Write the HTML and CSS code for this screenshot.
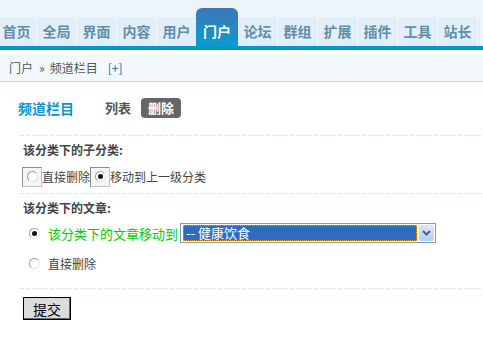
FILE: index.html
```html
<!DOCTYPE html>
<html lang="zh-CN">
<head>
    <meta charset="UTF-8">
    <title>频道栏目</title>
    <link rel="stylesheet" href="styles.css">
</head>
<body>

    <div class="header">
        <ul class="nav">
            <li>首页</li>
            <li>全局</li>
            <li>界面</li>
            <li>内容</li>
            <li>用户</li>
            <li class="active">门户</li>
            <li>论坛</li>
            <li>群组</li>
            <li>扩展</li>
            <li>插件</li>
            <li>工具</li>
            <li>站长</li>
        </ul>
    </div>
    <div class="bluebar"></div>

    <div class="crumb">
        <span>门户</span>
        <span class="sep">&raquo;</span>
        <span>频道栏目</span>
        <a class="add">[+]</a>
    </div>

    <div class="main">
        <div class="title-row">
            <h3>频道栏目</h3>
            <span class="tab">列表</span>
            <span class="tab current">删除</span>
        </div>

        <div class="section">
            <div class="sub-title">该分类下的子分类:</div>
            <div class="box-row">
                <span class="radio-box"><span class="radio"></span></span>
                <span>直接删除</span>
                <span class="radio-box"><span class="radio checked"></span></span>
                <span>移动到上一级分类</span>
            </div>
        </div>

        <div class="section">
            <div class="sub-title">该分类下的文章:</div>
            <div class="opt-row">
                <span class="radio checked"></span>
                <span class="green">该分类下的文章移动到</span>
                <div class="select">
                    <span class="select-value">-- 健康饮食</span>
                    <span class="select-btn">
                        <svg width="9" height="6" viewBox="0 0 9 6"><path d="M1 1 L4.5 4.5 L8 1" fill="none" stroke="#4d6185" stroke-width="2"/></svg>
                    </span>
                </div>
            </div>
            <div class="opt-row last-opt">
                <span class="radio"></span>
                <span>直接删除</span>
            </div>
        </div>

        <div class="section last">
            <button type="button">提交</button>
        </div>
    </div>

</body>
</html>
```

FILE: styles.css
```css
body {
    margin: 0;
    font-family: "Noto Sans CJK SC", "DejaVu Sans", sans-serif;
    font-size: 12px;
    color: #444;
    background-color: #fff;
}

.header {
    height: 46px;
    background-color: #edf5fb;
    display: flex;
    align-items: flex-end;
}

.nav {
    list-style: none;
    margin: 0 0 0 -3px;
    padding: 0;
    display: flex;
    align-items: flex-end;
    height: 29px;
    width: 100%;
    background-color: #e2eef8;
}

.nav li {
    width: 39px;
    height: 29px;
    line-height: 28px;
    text-align: center;
    font-size: 14px;
    font-weight: bold;
    color: #5f8fa9;
    border-right: 1px solid #f4f9fc;
    flex-shrink: 0;
}

.nav li.active {
    width: 42px;
    height: 38px;
    line-height: 46px;
    margin-left: -1px;
    color: #fff;
    border-right: none;
    border-radius: 6px 6px 0 0;
    background: linear-gradient(#3e77b6, #0a9bcf);
}

.bluebar {
    height: 4px;
    background-color: #0099cc;
}

.crumb {
    margin-top: 5px;
    height: 26px;
    line-height: 26px;
    padding-left: 9px;
    background-color: #f2f8fc;
    border-bottom: 1px solid #c8d5dd;
    color: #555;
    display: flex;
}

.crumb .sep {
    margin: 0 5px 0 6px;
}

.crumb .add {
    color: #2869a8;
    margin-left: 10px;
}

.main {
    padding-left: 20px;
}

.title-row {
    display: flex;
    align-items: center;
    height: 20px;
    margin: 16px 0 17px -2px;
}

.title-row h3 {
    margin: 0 24px 0 0;
    font-size: 14px;
    color: #0b95c8;
}

.tab {
    font-size: 13px;
    font-weight: bold;
    color: #555;
    padding: 0 7px;
    margin-right: 3px;
    height: 20px;
    line-height: 20px;
    border-radius: 4px;
}

.tab.current {
    background-color: #666;
    color: #fff;
}

.section {
    padding: 8px 0 0 0;
    background: repeating-linear-gradient(to right, #d3e8f5 0 4px, transparent 4px 6px) top left / 100% 1px no-repeat;
}

.sub-title {
    font-weight: bold;
    padding-left: 3px;
    height: 14px;
    line-height: 14px;
}

.box-row {
    display: flex;
    align-items: center;
    margin: 9px 0 6px 2px;
    height: 21px;
}

.radio-box {
    width: 18px;
    height: 18px;
    border: 1px solid #8c8c8c;
    border-right-color: #c0c0c0;
    border-bottom-color: #c0c0c0;
    background-color: #f5f5f5;
    display: flex;
    align-items: center;
    justify-content: center;
}

.radio {
    position: relative;
    width: 9px;
    height: 9px;
    border-radius: 50%;
    border: 1px solid #9a9a9a;
    border-right-color: #e6e6da;
    border-bottom-color: #e6e6da;
    background-color: #fff;
    display: inline-block;
}

.radio.checked::after {
    content: "";
    position: absolute;
    left: 2px;
    top: 2px;
    width: 5px;
    height: 5px;
    border-radius: 50%;
    background-color: #111;
}

.opt-row {
    display: flex;
    align-items: center;
    height: 20px;
    margin: 8px 0 10px 9px;
}

.opt-row.last-opt {
    margin-bottom: 15px;
}

.opt-row .radio {
    margin-right: 8px;
}

.green {
    font-size: 13px;
    color: #00cc00;
    margin-right: 2px;
}

.select {
    display: flex;
    align-items: center;
    width: 252px;
    height: 18px;
    border: 1px solid #7f9db9;
    padding: 0 1px;
    background-color: #fff;
}

.select-value {
    flex: 1;
    height: 14px;
    line-height: 14px;
    margin: 0 2px 0 1px;
    padding-left: 2px;
    font-size: 13px;
    background-color: #316ac5;
    color: #fff;
    border: 1px dotted #f0a000;
}

.select-btn {
    width: 15px;
    height: 16px;
    border-radius: 2px;
    background: linear-gradient(#dbe6fd, #b8cdf7);
    display: flex;
    align-items: center;
    justify-content: center;
}

.section.last {
    padding-top: 9px;
    height: 50px;
}

button {
    margin-left: 3px;
    width: 48px;
    height: 23px;
    padding: 0;
    font-family: "Noto Sans CJK SC", sans-serif;
    font-size: 14px;
    color: #000;
    background-color: #dcdcdc;
    border: 1px solid #000;
    box-shadow: inset -1px -1px 0 #666;
}
```
